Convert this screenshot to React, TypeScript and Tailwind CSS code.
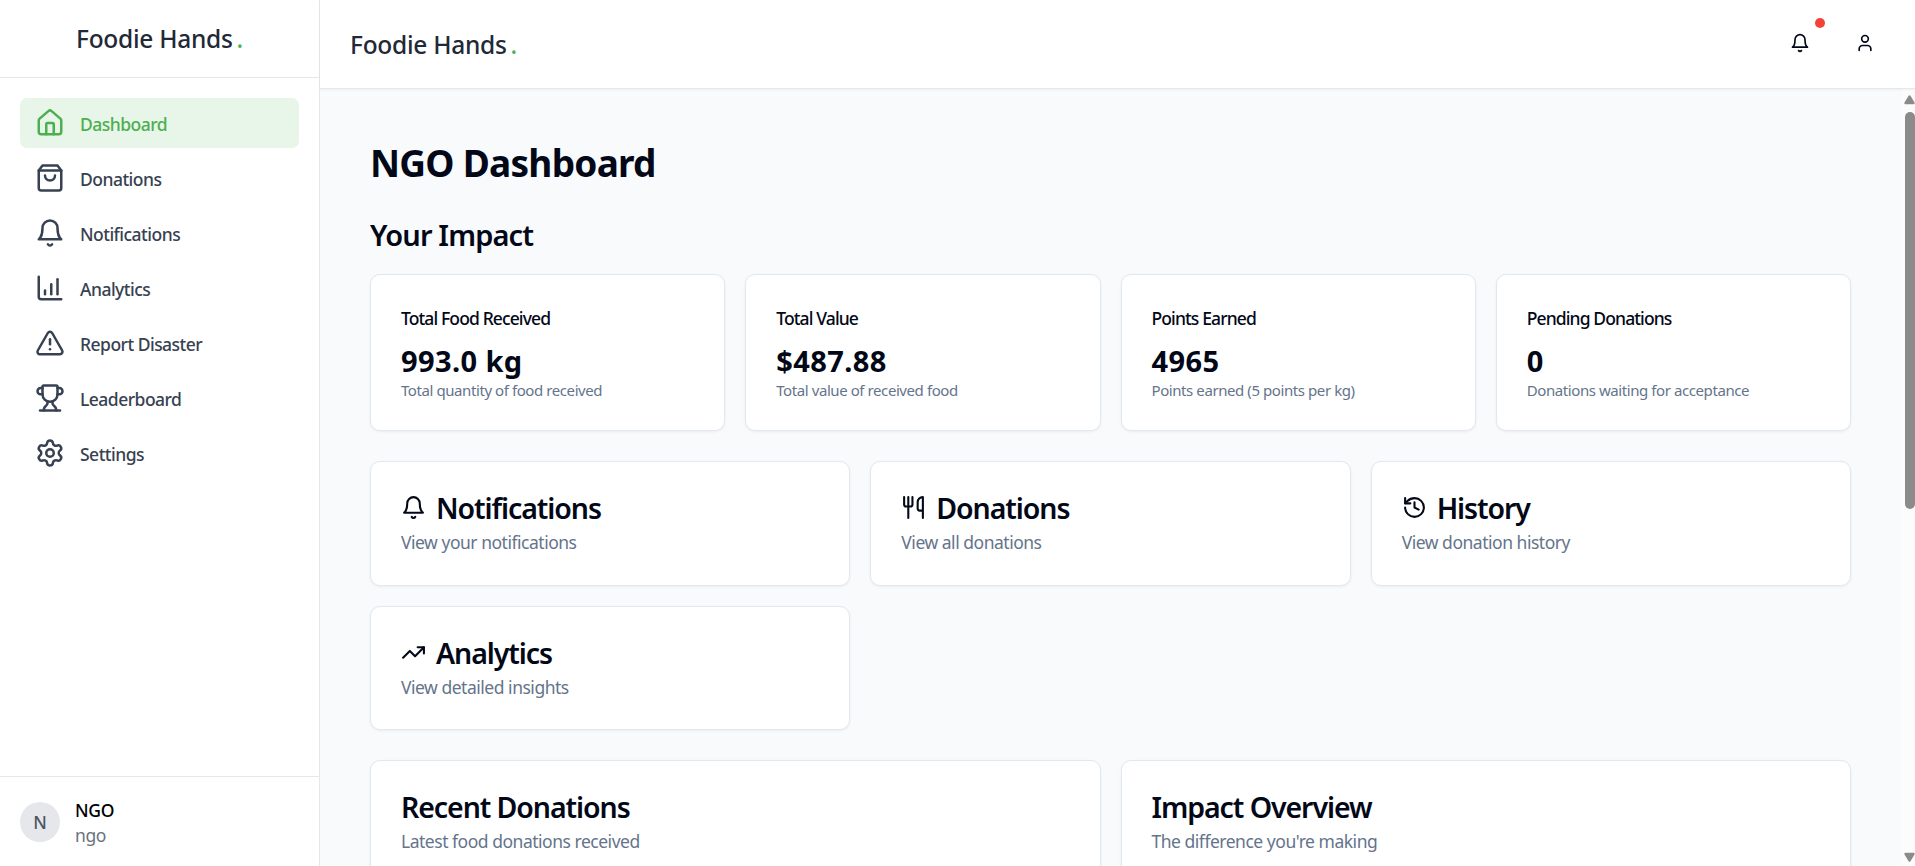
import type { ReactNode } from "react";
import {
  ChartColumnIncreasing,
  History,
  House,
  Settings,
  TrendingUp,
  TriangleAlert,
  Trophy,
  User,
  Utensils,
  type LucideIcon,
} from "lucide-react";

function BellIcon({ className }: { className?: string }) {
  return (
    <svg
      viewBox="0 0 24 24"
      fill="none"
      stroke="currentColor"
      strokeWidth="2"
      strokeLinecap="round"
      strokeLinejoin="round"
      className={className}
    >
      <path d="M6 8a6 6 0 0 1 12 0c0 7 3 9 3 9H3s3-2 3-9" />
      <path d="M10.3 21a1.94 1.94 0 0 0 3.4 0" />
    </svg>
  );
}

function BagIcon({ className }: { className?: string }) {
  return (
    <svg
      viewBox="0 0 24 24"
      fill="none"
      stroke="currentColor"
      strokeWidth="2"
      strokeLinecap="round"
      strokeLinejoin="round"
      className={className}
    >
      <path d="M6 2 3 6v14a2 2 0 0 0 2 2h14a2 2 0 0 0 2-2V6l-3-4Z" />
      <path d="M3 6h18" />
      <path d="M16 10a4 4 0 0 1-8 0" />
    </svg>
  );
}

type IconType = LucideIcon | typeof BellIcon;

const navItems: { label: string; icon: IconType; active?: boolean }[] = [
  { label: "Dashboard", icon: House, active: true },
  { label: "Donations", icon: BagIcon },
  { label: "Notifications", icon: BellIcon },
  { label: "Analytics", icon: ChartColumnIncreasing },
  { label: "Report Disaster", icon: TriangleAlert },
  { label: "Leaderboard", icon: Trophy },
  { label: "Settings", icon: Settings },
];

const stats = [
  { title: "Total Food Received", value: "993.0 kg", note: "Total quantity of food received" },
  { title: "Total Value", value: "$487.88", note: "Total value of received food" },
  { title: "Points Earned", value: "4965", note: "Points earned (5 points per kg)" },
  { title: "Pending Donations", value: "0", note: "Donations waiting for acceptance" },
];

const links: { title: string; text: string; icon: IconType }[] = [
  { title: "Notifications", text: "View your notifications", icon: BellIcon },
  { title: "Donations", text: "View all donations", icon: Utensils },
  { title: "History", text: "View donation history", icon: History },
  { title: "Analytics", text: "View detailed insights", icon: TrendingUp },
];

function Brand() {
  return (
    <div className="text-[24.5px] leading-[30px] font-medium tracking-[-0.28px] whitespace-nowrap text-[#1f2937]">
      Foodie Hands<span className="ml-[4px] text-[#4caf50]">.</span>
    </div>
  );
}

function Card({ className, children }: { className: string; children: ReactNode }) {
  return (
    <div
      className={`rounded-[10px] border border-[#e2e8f0] bg-white px-[30px] pt-[31px] shadow-[0_1px_3px_0_rgba(0,0,0,0.06)] ${className}`}
    >
      {children}
    </div>
  );
}

function CardTitle({ children }: { children: ReactNode }) {
  return (
    <h3 className="flex items-center text-[28.5px] leading-[30px] font-semibold tracking-[-1.08px]">
      {children}
    </h3>
  );
}

function CardText({ children }: { children: ReactNode }) {
  return (
    <p className="mt-[7px] text-[17.5px] leading-[25px] tracking-[-0.48px] text-[#64748b]">
      {children}
    </p>
  );
}

function Sidebar() {
  return (
    <aside className="flex w-[320px] shrink-0 flex-col border-r border-[#e5e7eb] bg-white">
      <div className="flex h-[78px] items-center justify-center border-b border-[#e5e7eb]">
        <Brand />
      </div>
      <nav className="flex flex-1 flex-col gap-[5px] p-5">
        {navItems.map(({ label, icon: Icon, active }) => (
          <a
            key={label}
            className={`flex h-[50px] items-center gap-[15px] rounded-[7px] px-[15px] ${
              active ? "bg-[#e8f5e9] text-[#4caf50]" : "text-[#374151]"
            }`}
          >
            <Icon className="size-[30px]" />
            <span className="pt-[2px] text-[17.5px] leading-[25px] font-medium tracking-[-0.52px]">
              {label}
            </span>
          </a>
        ))}
      </nav>
      <div className="flex h-[90px] items-start gap-[15px] border-t border-[#e5e7eb] px-5 pt-[25px]">
        <div className="flex size-10 items-center justify-center rounded-full bg-[#e5e7eb] pt-px text-[17.5px] font-medium text-[#4b5563]">
          N
        </div>
        <div className="-mt-[4px]">
          <div className="text-[17.5px] leading-[25px] font-medium tracking-[-0.3px] text-black">NGO</div>
          <div className="text-[17.5px] leading-[25px] tracking-[-0.4px] text-[#6b7280]">ngo</div>
        </div>
      </div>
    </aside>
  );
}

function Header() {
  return (
    <header className="z-10 flex h-[89px] shrink-0 items-center justify-between border-b border-[#e5e7eb] bg-white pr-[40px] pl-[30px] shadow-[0_1px_2px_0_rgba(0,0,0,0.05)]">
      <div className="pt-[2px]">
        <Brand />
      </div>
      <div className="flex items-center gap-[45px] pb-[3px]">
        <button className="relative">
          <BellIcon className="size-5" />
          <span className="absolute -top-[15px] -right-[15px] size-[10px] rounded-full bg-[#f44336]" />
        </button>
        <button>
          <User className="size-5" />
        </button>
      </div>
    </header>
  );
}

function Scrollbar() {
  return (
    <div className="flex w-[14px] shrink-0 flex-col items-end bg-[#fcfcfc] pt-[6px] text-[#8b8b8b]">
      <svg viewBox="0 0 11 10" className="h-[10px] w-[11px] fill-current">
        <path d="M4.6 .8a1.2 1.2 0 0 1 1.9 0l4 6.6a1.2 1.2 0 0 1-.9 1.9H1.4A1.2 1.2 0 0 1 .5 7.4Z" />
      </svg>
      <div className="mt-[7px] h-[397px] w-[10px] rounded-[5px] bg-[#8b8b8b]" />
      <svg viewBox="0 0 11 10" className="mt-auto mb-[4px] h-[10px] w-[11px] fill-current">
        <path d="M4.6 9.2a1.2 1.2 0 0 0 1.9 0l4-6.6A1.2 1.2 0 0 0 9.6 .7H1.4A1.2 1.2 0 0 0 .5 2.6Z" />
      </svg>
    </div>
  );
}

export default function App() {
  return (
    <div className="flex h-[866px] w-full overflow-hidden bg-white font-['Noto_Sans','Open_Sans',sans-serif] text-[#020817]">
      <Sidebar />
      <div className="flex min-w-0 flex-1 flex-col">
        <Header />
        <div className="flex min-h-0 flex-1 bg-[#f9fafc]">
          <main className="min-w-0 flex-1 overflow-hidden pt-[51px] pr-[50px] pl-[50px]">
            <h1 className="text-[37px] leading-[45px] font-bold tracking-[-0.75px]">NGO Dashboard</h1>
            <h2 className="mt-[30px] text-[29px] leading-[40px] font-semibold tracking-[-0.85px]">
              Your Impact
            </h2>

            <section className="mt-[19px] grid grid-cols-4 gap-5">
              {stats.map((s) => (
                <Card key={s.title} className="h-[157px]">
                  <h3 className="text-[17.5px] leading-[25px] font-medium tracking-[-0.88px]">
                    {s.title}
                  </h3>
                  <div className="mt-[10px] text-[29px] leading-[40px] font-bold tracking-[0.4px]">
                    {s.value}
                  </div>
                  <p className="text-[15px] leading-[19px] tracking-[-0.42px] text-[#64748b]">
                    {s.note}
                  </p>
                </Card>
              ))}
            </section>

            <section className="mt-[30px] grid grid-cols-3 grid-rows-[125px_124px] gap-5">
              {links.map(({ title, text, icon: Icon }) => (
                <Card key={title} className="h-full">
                  <CardTitle>
                    <Icon className="mr-[10px] mb-[1px] size-[25px]" />
                    {title}
                  </CardTitle>
                  <CardText>{text}</CardText>
                </Card>
              ))}
            </section>

            <section className="mt-[30px] grid grid-cols-2 gap-5">
              <Card className="h-[400px]">
                <CardTitle>Recent Donations</CardTitle>
                <CardText>Latest food donations received</CardText>
              </Card>
              <Card className="h-[400px]">
                <CardTitle>Impact Overview</CardTitle>
                <CardText>The difference you're making</CardText>
              </Card>
            </section>
          </main>
          <Scrollbar />
        </div>
      </div>
    </div>
  );
}
